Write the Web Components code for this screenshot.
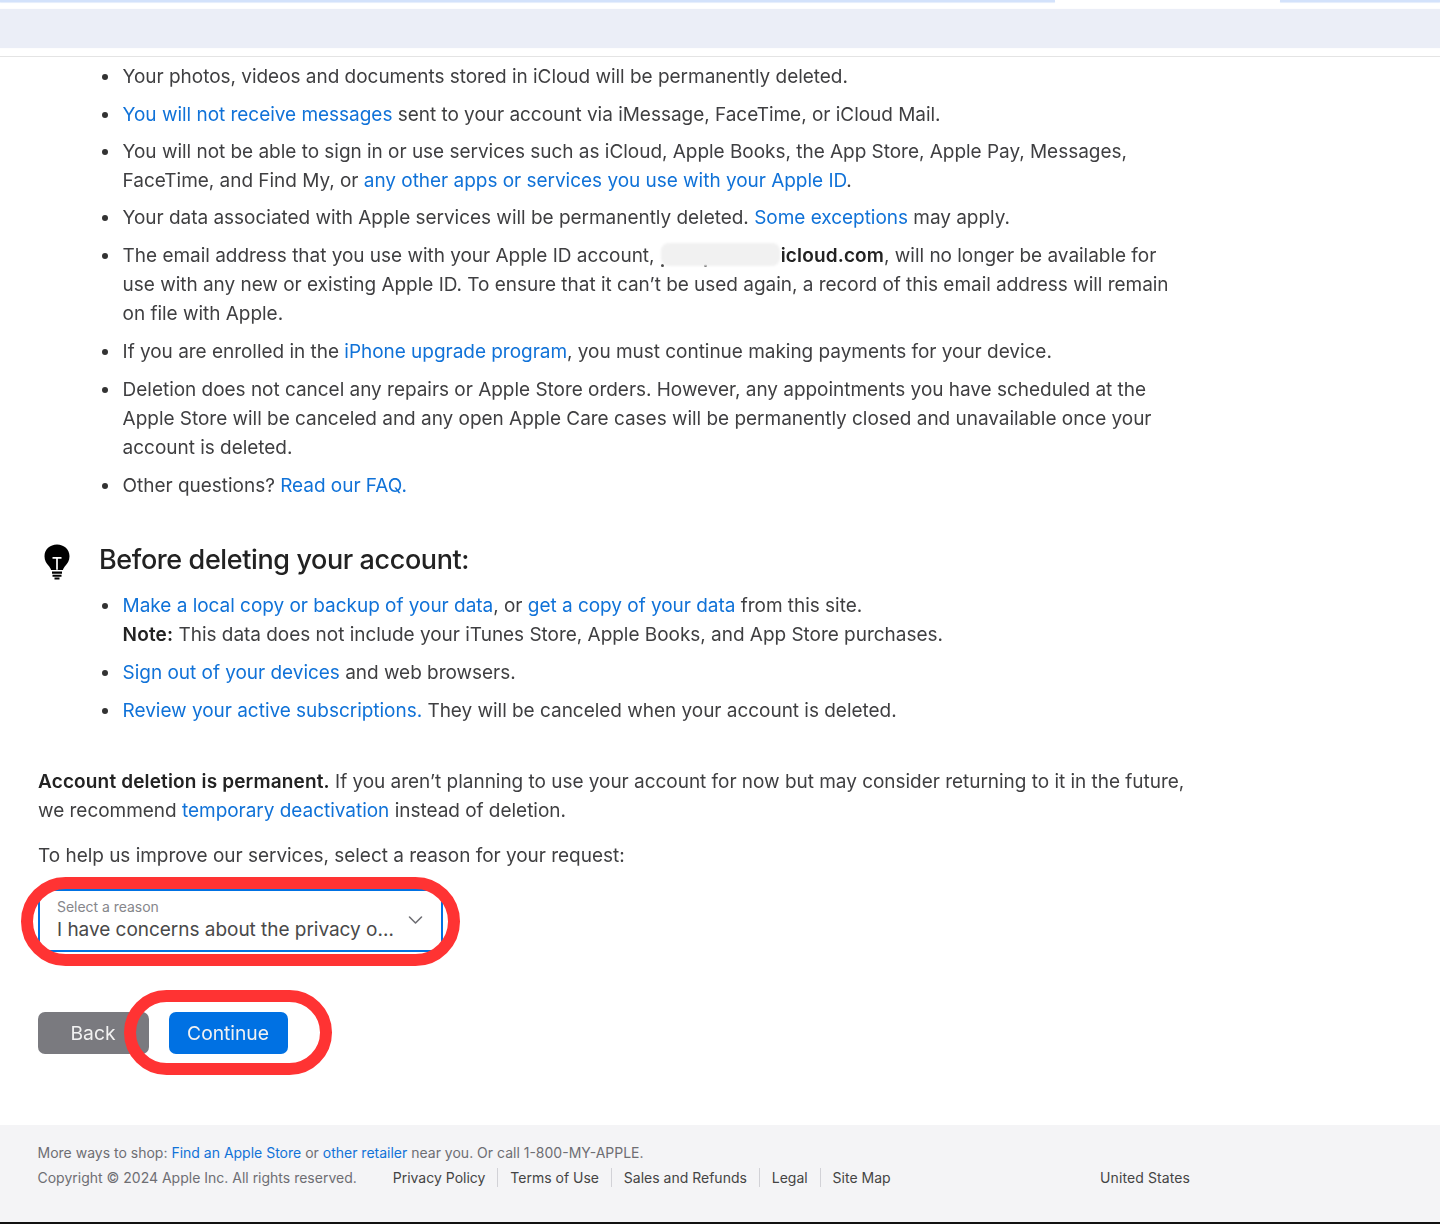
<!DOCTYPE html>
<html lang="en">
<head>
<meta charset="utf-8">
<title>Delete account</title>
<style>
  html, body { margin: 0; background: #fff; }
  body { width: 1440px; height: 1224px; overflow: hidden; position: relative; font-family: Inter, "Liberation Sans", sans-serif; color: #333; }
</style>
</head>
<body>
<top-band></top-band>

<page-main>
  <info-list>
    <info-item>Your photos, videos and documents stored in iCloud will be permanently deleted.</info-item>
    <info-item><app-link>You will not receive messages</app-link> sent to your account via iMessage, FaceTime, or iCloud Mail.</info-item>
    <info-item style="margin-bottom:-1px">You will not be able to sign in or use services such as iCloud, Apple Books, the App Store, Apple Pay, Messages, FaceTime, and Find My, or <app-link>any other apps or services you use with your Apple ID</app-link>.</info-item>
    <info-item>Your data associated with Apple services will be permanently deleted. <app-link>Some exceptions</app-link> may apply.</info-item>
    <info-item style="margin-bottom:1px">The email address that you use with your Apple ID account, <masked-text></masked-text><strong-text>icloud.com</strong-text>, will no longer be available for use with any new or existing Apple ID. To ensure that it can’t be used again, a record of this email address will remain on file with Apple.</info-item>
    <info-item>If you are enrolled in the <app-link>iPhone upgrade program</app-link>, you must continue making payments for your device.</info-item>
    <info-item>Deletion does not cancel any repairs or Apple Store orders. However, any appointments you have scheduled at the Apple Store will be canceled and any open Apple Care cases will be permanently closed and unavailable once your account is deleted.</info-item>
    <info-item>Other questions? <app-link>Read our FAQ.</app-link></info-item>
  </info-list>

  <section-heading>Before deleting your account:</section-heading>

  <info-list>
    <info-item><app-link>Make a local copy or backup of your data</app-link>, or <app-link>get a copy of your data</app-link> from this site.<br><strong-text>Note:</strong-text> This data does not include your iTunes Store, Apple Books, and App Store purchases.</info-item>
    <info-item><app-link>Sign out of your devices</app-link> and web browsers.</info-item>
    <info-item><app-link>Review your active subscriptions.</app-link> They will be canceled when your account is deleted.</info-item>
  </info-list>

  <body-text style="margin-top:42px"><strong-text>Account deletion is permanent.</strong-text> If you aren’t planning to use your account for now but may consider returning to it in the future, we recommend <app-link>temporary deactivation</app-link> instead of deletion.</body-text>
  <body-text style="margin-top:16px">To help us improve our services, select a reason for your request:</body-text>

  <reason-select label="Select a reason" value="I have concerns about the privacy o…"></reason-select>

  <button-row>
    <app-button kind="back">Back</app-button>
    <app-button kind="primary">Continue</app-button>
  </button-row>
</page-main>

<site-footer>
  <span slot="shop">More ways to shop: <app-link>Find an Apple Store</app-link> or <app-link>other retailer</app-link> near you. Or call 1-800-MY-APPLE.</span>
  <span slot="copy">Copyright © 2024 Apple Inc. All rights reserved.</span>
  <footer-link>Privacy Policy</footer-link>
  <footer-link>Terms of Use</footer-link>
  <footer-link>Sales and Refunds</footer-link>
  <footer-link>Legal</footer-link>
  <footer-link last>Site Map</footer-link>
  <span slot="region">United States</span>
</site-footer>

<red-oval style="left:21px;top:877px;width:439px;height:89px"></red-oval>
<red-oval style="left:124px;top:990px;width:208px;height:85px"></red-oval>

<script>
"use strict";
(() => {
  var BaseElement = class extends HTMLElement {
    constructor() {
      super();
      this.shadow = this.attachShadow({ mode: "open" });
    }
    connectedCallback() {
      this.render();
    }
    render() {
    }
  };

  var TopBand = class extends BaseElement {
    render() {
      this.shadow.innerHTML = `
      <style>
        :host { display: block; height: 56px; border-bottom: 1px solid #e4e4e4; box-sizing: content-box; }
        .strip { display: flex; justify-content: space-between; height: 3px; margin-bottom: 6px; }
        .strip i { display: block; height: 2px; background: #d3e2fb; box-shadow: 0 1px 1px #e4edfc; }
        .strip i:first-child { width: 1055px; }
        .strip i:last-child { width: 160px; }
        .bar { height: 39px; background: #ebeef7; box-shadow: 0 0 1px #f2f4fa; }
      </style>
      <div class="strip"><i></i><i></i></div>
      <div class="bar"></div>`;
    }
  };

  var PageMain = class extends BaseElement {
    render() {
      this.shadow.innerHTML = `
      <style>
        :host { display: block; width: 1190px; padding: 5px 0 0 38px; height: 1068px; box-sizing: border-box; font-size: 19px; line-height: 29px; letter-spacing: -0.03px; color: #3f3f41; filter: blur(0.3px); }
      </style>
      <slot></slot>`;
    }
  };

  var InfoList = class extends BaseElement {
    render() {
      this.shadow.innerHTML = `
      <style>
        :host { display: flex; flex-direction: column; gap: 8.7px; padding-left: 84.6px; }
      </style>
      <slot></slot>`;
    }
  };

  var InfoItem = class extends BaseElement {
    render() {
      this.shadow.innerHTML = `
      <style>
        :host { display: block; position: relative; }
        .dot { position: absolute; left: -21px; top: 12px; width: 6px; height: 6px; border-radius: 50%; background: #333; }
      </style>
      <span class="dot"></span><slot></slot>`;
    }
  };

  var AppLink = class extends BaseElement {
    render() {
      this.shadow.innerHTML = `
      <style>
        :host { display: inline; color: #1072d8; }
      </style>
      <slot></slot>`;
    }
  };

  var StrongText = class extends BaseElement {
    render() {
      this.shadow.innerHTML = `
      <style>
        :host { display: inline; font-weight: 600; color: #222; letter-spacing: 0.15px; }
      </style>
      <slot></slot>`;
    }
  };

  var MaskedText = class extends BaseElement {
    render() {
      this.shadow.innerHTML = `
      <style>
        :host { display: inline-block; position: relative; width: 116px; height: 14px; vertical-align: baseline; }
        .blob { position: absolute; left: 1px; top: -5px; width: 119px; height: 23px; border-radius: 8px; background: #f1f1f1; filter: blur(1px); }
        .mark { position: absolute; width: 3px; height: 3px; top: 16px; background: #444; border-radius: 50%; }
      </style>
      <span class="mark" style="left:1px"></span>
      <span class="mark" style="left:44px"></span>
      <span class="blob"></span>`;
    }
  };

  var SectionHeading = class extends BaseElement {
    render() {
      this.shadow.innerHTML = `
      <style>
        :host { display: flex; align-items: center; gap: 29px; margin: 42px 0 13.600px 6px; font-size: 27px; line-height: 36px; font-weight: 500; color: #222; letter-spacing: -0.4px; }
        svg { display: block; width: 26px; height: 36px; flex: none; margin: 2px 0 -2px; }
      </style>
      <svg viewBox="0 0 26 36">
        <path fill="#000" d="M13 0.5C5.9 0.5 0.5 5.6 0.5 12.2c0 4.4 2 7 3.9 9.3 1.2 1.5 2.2 2.8 2.7 4.5h11.8c.5-1.7 1.5-3 2.7-4.5 1.9-2.3 3.9-4.9 3.9-9.3C25.500 5.600 20.100 0.500 13 0.500Z"/>
        <path fill="none" stroke="#fff" stroke-width="1.7" d="M8.500 13.800h9M13 13.800v12"/>
        <path fill="#000" d="M8 27.500h10v2.200H8zM8.500 30.700h9v2H8.500zM10.500 33.600h5v2h-5z"/>
      </svg>
      <slot></slot>`;
    }
  };

  var BodyText = class extends BaseElement {
    render() {
      this.shadow.innerHTML = `
      <style>
        :host { display: block; }
      </style>
      <slot></slot>`;
    }
  };

  var ReasonSelect = class extends BaseElement {
    render() {
      this.shadow.innerHTML = `
      <style>
        :host { display: block; width: 405px; height: 63px; margin-top: 19px; box-sizing: border-box; border: 2px solid #0071e3; border-radius: 8px; position: relative; padding: 7px 48px 0 17px; background: #fff; }
        .label { font-size: 14px; line-height: 17px; color: #86868b; }
        .value { font-size: 19px; line-height: 29px; color: #494949; white-space: nowrap; }
        svg { position: absolute; right: 18px; top: 24px; width: 15px; height: 10px; }
      </style>
      <div class="label">${this.getAttribute("label")}</div>
      <div class="value">${this.getAttribute("value")}</div>
      <svg viewBox="0 0 15 10"><path d="M1.500 2l6 6 6-6" fill="none" stroke="#6e6e73" stroke-width="1.600" stroke-linecap="round" stroke-linejoin="round"/></svg>`;
    }
  };

  var ButtonRow = class extends BaseElement {
    render() {
      this.shadow.innerHTML = `
      <style>
        :host { display: flex; gap: 20px; margin-top: 60px; }
      </style>
      <slot></slot>`;
    }
  };

  var AppButton = class extends BaseElement {
    render() {
      var back = this.getAttribute("kind") === "back";
      this.shadow.innerHTML = `
      <style>
        :host { display: flex; align-items: center; justify-content: center; box-sizing: border-box; height: 42px; padding: 1px 1px 0 0; border-radius: 7px; font-size: 19.300px; color: #f2f2f2; width: ${back ? 111 : 119}px; background: ${back ? "#7a7a7f" : "#0071e3"}; }
      </style>
      <slot></slot>`;
    }
  };

  var SiteFooter = class extends BaseElement {
    render() {
      this.shadow.innerHTML = `
      <style>
        :host { display: block; height: 99px; box-sizing: border-box; padding: 15px 250px 0 37.500px; background: #f4f4f6; border-bottom: 2px solid #111; font-size: 14px; line-height: 25px; color: #6e6e73; }
        .row { display: flex; align-items: center; height: 25px; }
        .links { display: flex; align-items: center; margin-left: 36px; color: #444; flex: 1; }
        .region { color: #444; letter-spacing: 0.1px; }
      </style>
      <div class="row"><slot name="shop"></slot></div>
      <div class="row">
        <slot name="copy"></slot>
        <div class="links"><slot></slot></div>
        <span class="region"><slot name="region"></slot></span>
      </div>`;
    }
  };

  var FooterLink = class extends BaseElement {
    render() {
      var last = this.hasAttribute("last");
      this.shadow.innerHTML = `
      <style>
        :host { display: block; line-height: 19px; padding-right: 12px; margin-right: 11.900px; ${last ? "" : "border-right: 1px solid #d2d2d7;"} }
      </style>
      <slot></slot>`;
    }
  };

  var RedOval = class extends BaseElement {
    render() {
      this.shadow.innerHTML = `
      <style>
        :host { display: block; position: absolute; box-sizing: border-box; border: 12px solid #ff3333; border-radius: 46px; }
      </style>`;
    }
  };

  customElements.define("top-band", TopBand);
  customElements.define("page-main", PageMain);
  customElements.define("info-list", InfoList);
  customElements.define("info-item", InfoItem);
  customElements.define("app-link", AppLink);
  customElements.define("strong-text", StrongText);
  customElements.define("masked-text", MaskedText);
  customElements.define("section-heading", SectionHeading);
  customElements.define("body-text", BodyText);
  customElements.define("reason-select", ReasonSelect);
  customElements.define("button-row", ButtonRow);
  customElements.define("app-button", AppButton);
  customElements.define("site-footer", SiteFooter);
  customElements.define("footer-link", FooterLink);
  customElements.define("red-oval", RedOval);
})();
</script>
</body>
</html>
